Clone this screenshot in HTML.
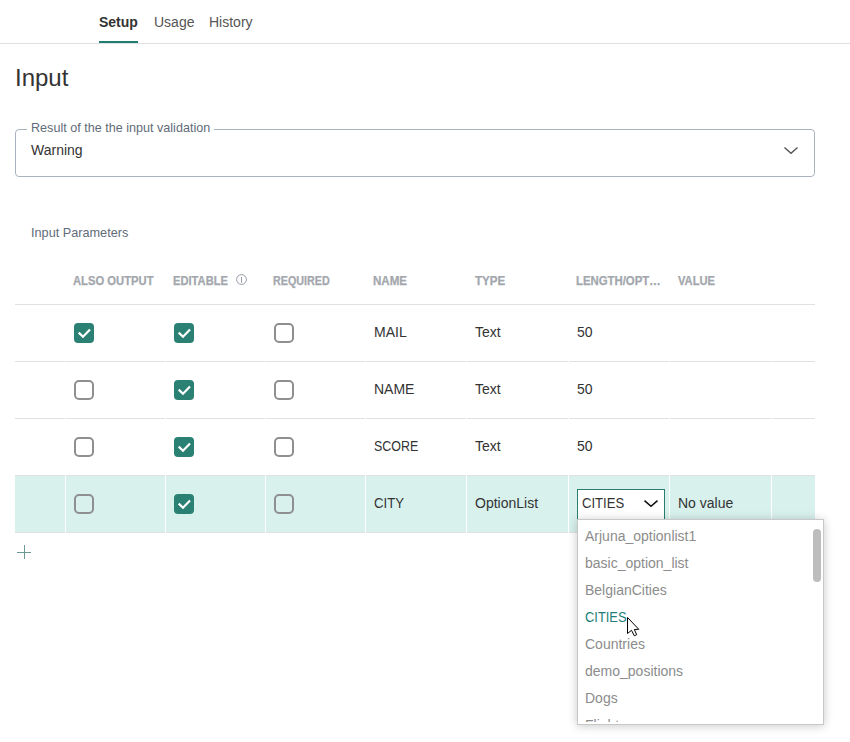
<!DOCTYPE html>
<html><head><meta charset="utf-8">
<style>
*{box-sizing:border-box;margin:0;padding:0}
html,body{width:850px;height:742px;overflow:hidden;background:#fff}
body{position:relative;font-family:"Liberation Sans",sans-serif;color:#333}
.a{position:absolute;white-space:nowrap}
.t14{font-size:14px;line-height:20px}
.tab{color:#555}
.hdr{font-size:12px;font-weight:bold;color:#a3a7ad;line-height:16px;-webkit-text-stroke:0.25px #a3a7ad}
.cell{font-size:14px;line-height:20px;color:#333}
.hline{position:absolute;height:1px;background:#dfe1e4}
.gap{position:absolute;width:1px;background:#fff}
.cb{position:absolute;width:20px;height:20px;border-radius:4px}
.cb.off{border:2px solid #8f8f8f;background:transparent;border-radius:5px}
.cb.on{background:#2a8073}
.cb.on svg{position:absolute;left:0;top:0}
.opt{position:absolute;left:585px;font-size:14px;line-height:20px;color:#8c8c8c;white-space:nowrap}
</style></head><body>

<!-- tabs -->
<div class="a t14" style="left:99px;top:12px;font-weight:bold;color:#333">Setup</div>
<div class="a t14 tab" style="left:154px;top:12px">Usage</div>
<div class="a t14 tab" style="left:209px;top:12px">History</div>
<div class="a" style="left:0;top:43px;width:850px;height:1px;background:#dfe1e4"></div>
<div class="a" style="left:99px;top:41px;width:39px;height:2px;background:#1f7e70"></div>

<!-- heading -->
<div class="a" style="left:15px;top:64px;font-size:24px;line-height:28px;color:#333">Input</div>

<!-- outlined select -->
<div class="a" style="left:15px;top:129px;width:800px;height:48px;border:1px solid #a9b3bf;border-radius:4px"></div>
<div class="a" style="left:27px;top:120px;height:16px;padding:0 4px;background:#fff;font-size:12.6px;line-height:16px;color:#5f6b78">Result of the the input validation</div>
<div class="a t14" style="left:31px;top:140px;color:#333">Warning</div>
<svg class="a" style="left:783px;top:145px" width="16" height="10" viewBox="0 0 16 10"><path d="M1.5 2.5 L8 8.2 L14.5 2.5" fill="none" stroke="#555" stroke-width="1.4"/></svg>

<!-- Input parameters -->
<div class="a" style="left:31px;top:225px;font-size:12.7px;line-height:16px;color:#5f6b78">Input Parameters</div>

<!-- table header -->
<div class="a hdr" style="left:73px;top:273px;transform:scaleX(0.936);transform-origin:0 0">ALSO OUTPUT</div>
<div class="a hdr" style="left:173px;top:273px;transform:scaleX(0.93);transform-origin:0 0">EDITABLE</div>
<svg class="a" style="left:235px;top:273px" width="13" height="13" viewBox="0 0 13 13"><circle cx="6.5" cy="6.5" r="4.9" fill="none" stroke="#8a8f9c" stroke-width="0.9"/><path d="M6.5 4 V9.7" stroke="#8a8f9c" stroke-width="0.9"/></svg>
<div class="a hdr" style="left:273px;top:273px;transform:scaleX(0.895);transform-origin:0 0">REQUIRED</div>
<div class="a hdr" style="left:373px;top:273px;transform:scaleX(0.965);transform-origin:0 0">NAME</div>
<div class="a hdr" style="left:475px;top:273px;transform:scaleX(0.967);transform-origin:0 0">TYPE</div>
<div class="a hdr" style="left:576px;top:273px;transform:scaleX(0.947);transform-origin:0 0">LENGTH/OPT…</div>
<div class="a hdr" style="left:678px;top:273px;transform:scaleX(0.93);transform-origin:0 0">VALUE</div>

<!-- highlighted row bg -->
<div class="a" style="left:15px;top:475px;width:800px;height:57px;background:#d8f1ed"></div>

<!-- row lines -->
<div class="hline" style="left:15px;top:304px;width:800px"></div>
<div class="hline" style="left:15px;top:361px;width:800px"></div>
<div class="hline" style="left:15px;top:418px;width:800px"></div>
<div class="hline" style="left:15px;top:475px;width:800px"></div>
<div class="hline" style="left:15px;top:532px;width:800px"></div>

<!-- column gaps (rows area 305..533) -->
<div class="gap" style="left:65px;top:305px;height:228px"></div>
<div class="gap" style="left:165px;top:305px;height:228px"></div>
<div class="gap" style="left:265px;top:305px;height:228px"></div>
<div class="gap" style="left:365px;top:305px;height:228px"></div>
<div class="gap" style="left:466px;top:305px;height:228px"></div>
<div class="gap" style="left:568px;top:305px;height:228px"></div>
<div class="gap" style="left:669px;top:305px;height:228px"></div>
<div class="gap" style="left:771px;top:305px;height:228px"></div>

<!-- rows -->
<!-- row 1 -->
<div class="cb on" style="left:74px;top:323px"><svg width="20" height="20" viewBox="0 0 20 20"><path d="M4.7 9.6 L9 13.8 L16 6.4" fill="none" stroke="#fff" stroke-width="2.2"/></svg></div>
<div class="cb on" style="left:174px;top:323px"><svg width="20" height="20" viewBox="0 0 20 20"><path d="M4.7 9.6 L9 13.8 L16 6.4" fill="none" stroke="#fff" stroke-width="2.2"/></svg></div>
<div class="cb off" style="left:274px;top:323px"></div>
<div class="a cell" style="left:374px;top:322px">MAIL</div>
<div class="a cell" style="left:475px;top:322px">Text</div>
<div class="a cell" style="left:577px;top:322px">50</div>

<!-- row 2 -->
<div class="cb off" style="left:74px;top:380px"></div>
<div class="cb on" style="left:174px;top:380px"><svg width="20" height="20" viewBox="0 0 20 20"><path d="M4.7 9.6 L9 13.8 L16 6.4" fill="none" stroke="#fff" stroke-width="2.2"/></svg></div>
<div class="cb off" style="left:274px;top:380px"></div>
<div class="a cell" style="left:374px;top:379px">NAME</div>
<div class="a cell" style="left:475px;top:379px">Text</div>
<div class="a cell" style="left:577px;top:379px">50</div>

<!-- row 3 -->
<div class="cb off" style="left:74px;top:437px"></div>
<div class="cb on" style="left:174px;top:437px"><svg width="20" height="20" viewBox="0 0 20 20"><path d="M4.7 9.6 L9 13.8 L16 6.4" fill="none" stroke="#fff" stroke-width="2.2"/></svg></div>
<div class="cb off" style="left:274px;top:437px"></div>
<div class="a cell" style="left:374px;top:436px;transform:scaleX(0.888);transform-origin:0 0">SCORE</div>
<div class="a cell" style="left:475px;top:436px">Text</div>
<div class="a cell" style="left:577px;top:436px">50</div>

<!-- row 4 -->
<div class="cb off" style="left:74px;top:494px"></div>
<div class="cb on" style="left:174px;top:494px"><svg width="20" height="20" viewBox="0 0 20 20"><path d="M4.7 9.6 L9 13.8 L16 6.4" fill="none" stroke="#fff" stroke-width="2.2"/></svg></div>
<div class="cb off" style="left:274px;top:494px"></div>
<div class="a cell" style="left:374px;top:493px;transform:scaleX(0.94);transform-origin:0 0">CITY</div>
<div class="a cell" style="left:475px;top:493px">OptionList</div>
<div class="a" style="left:577px;top:489px;width:88px;height:40px;border:1px solid #2a7d70;background:#fff"></div>
<div class="a cell" style="left:582px;top:493px;transform:scaleX(0.936);transform-origin:0 0">CITIES</div>
<svg class="a" style="left:643px;top:498px" width="16" height="11" viewBox="0 0 16 11"><path d="M1.5 2.6 L8 8.3 L14.5 2.6" fill="none" stroke="#111" stroke-width="1.6"/></svg>
<div class="a cell" style="left:678px;top:493px">No value</div>

<!-- plus -->
<div class="a" style="left:17px;top:552px;width:14px;height:1px;background:#6a9a93"></div>
<div class="a" style="left:24px;top:545px;width:1px;height:14px;background:#6a9a93"></div>

<!-- dropdown -->
<div class="a" style="left:577px;top:519px;width:247px;height:206px;background:#fff;border:1px solid #c8c8c8;box-shadow:0 1px 9px rgba(0,0,0,0.22);overflow:hidden">
</div>
<div class="a" style="left:578px;top:520px;width:245px;height:202px;overflow:hidden">
  <div class="opt" style="left:7px;top:6px">Arjuna_optionlist1</div>
  <div class="opt" style="left:7px;top:33px">basic_option_list</div>
  <div class="opt" style="left:7px;top:60px">BelgianCities</div>
  <div class="opt" style="left:7px;top:87px;color:#22807a;transform:scaleX(0.92);transform-origin:0 0">CITIES</div>
  <div class="opt" style="left:7px;top:114px">Countries</div>
  <div class="opt" style="left:7px;top:141px">demo_positions</div>
  <div class="opt" style="left:7px;top:168px">Dogs</div>
  <div class="opt" style="left:7px;top:195px">Flights</div>
  <div class="a" style="left:235px;top:9px;width:8px;height:53px;border-radius:4px;background:#bdbdbd"></div>
</div>

<!-- cursor -->
<svg class="a" style="left:627px;top:617px" width="14" height="21" viewBox="0 0 14 21"><path d="M0.5 0.5 L0.5 16.5 L4.5 13.3 L7.3 18.8 L9.7 17.7 L7.3 12.5 L11.8 12.3 Z" fill="#fff" stroke="#000" stroke-width="1" stroke-linejoin="round"/></svg>

</body></html>
